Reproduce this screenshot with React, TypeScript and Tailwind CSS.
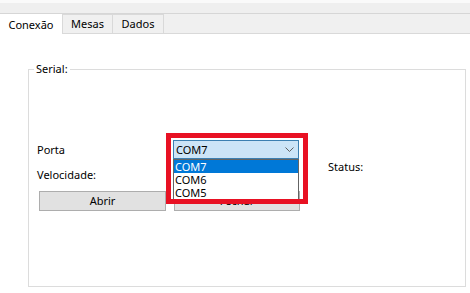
import { useState } from "react";

const tabs = ["Conexão", "Mesas", "Dados"];
const tabWidths = ["w-[62px]", "w-[51px]", "w-[51px]"];
const ports = ["COM7", "COM6", "COM5"];

const ComboBox = ({ value }: { value: string }) => (
  <div className="relative h-[19px] w-[126px]">
    <div className="flex h-full items-center justify-between border border-[#3c7fb1] bg-[#cce4f7] pl-[2px] pr-[4px]">
      <span className="leading-[16px]">{value}</span>
      <svg className="h-[5px] w-[9px]" viewBox="0 0 9 5" fill="none">
        <path d="M0.5 0.5 L4.5 4.5 L8.5 0.5" stroke="#606060" strokeWidth="1" />
      </svg>
    </div>
    {/* open list */}
    <div className="absolute left-0 top-full z-10 w-full border border-[#646464] bg-white">
      {ports.map((port, i) => (
        <div
          className={
            i === 0
              ? "h-[13px] bg-[#0078d7] pl-[1px] leading-[13px] text-white"
              : "h-[13px] pl-[1px] leading-[13px]"
          }
          key={port}
        >
          {port}
        </div>
      ))}
    </div>
    {/* annotation */}
    <div className="pointer-events-none absolute left-[-7px] top-[-7px] z-20 h-[71px] w-[142px] border-[5px] border-[#e81123]" />
  </div>
);

const WinButton = ({ label, className }: { label: string; className: string }) => (
  <button
    className={`h-[20px] border border-[#adadad] bg-[#e1e1e1] leading-[16px] ${className}`}
    type="button"
  >
    {label}
  </button>
);

const App = () => {
  const [active, setActive] = useState(0);

  return (
    <div className="relative h-[293px] w-[470px] overflow-hidden bg-white font-['Noto_Sans',sans-serif] text-[11px] text-black">
      <div className="h-[3px] bg-[#fafafa]" />
      <div className="h-[10px] bg-[#efefef]" />
      <div className="h-px bg-[#d6d6d6]" />

      {/* tab strip */}
      <div className="flex h-[20px] border-b border-[#d9d9d9] bg-[#f0f0f0]">
        {tabs.map((tab, i) => (
          <button
            className={
              i === active
                ? `${tabWidths[i]} relative z-10 h-[21px] bg-white leading-[16px]`
                : `${tabWidths[i]} h-[19px] border-r border-t border-[#d9d9d9] bg-[#f0f0f0] leading-[16px] ${i === active + 1 ? "border-l" : ""}`
            }
            key={tab}
            onClick={() => setActive(i)}
            type="button"
          >
            {tab}
          </button>
        ))}
      </div>

      <fieldset className="ml-[28px] mt-[27px] h-[226px] w-[438px] border border-[#dcdcdc]">
        <legend className="ml-[5px] px-[2px] leading-[16px]">Serial:</legend>
        <div className="grid grid-cols-[136px_126px_1fr] grid-rows-[19px_32px_20px] pl-[8px] pt-[63px]">
          <div className="flex items-center leading-[16px]">Porta</div>
          <ComboBox value="COM7" />
          <div />

          <div className="mt-[8px] leading-[16px]">Velocidade:</div>
          <div />
          <div className="pl-[29px] leading-[16px]">Status:</div>

          <WinButton className="ml-[2px] w-[127px]" label="Abrir" />
          <WinButton className="ml-[1px] w-[126px]" label="Fechar" />
          <div />
        </div>
      </fieldset>
    </div>
  );
};

export default App;
